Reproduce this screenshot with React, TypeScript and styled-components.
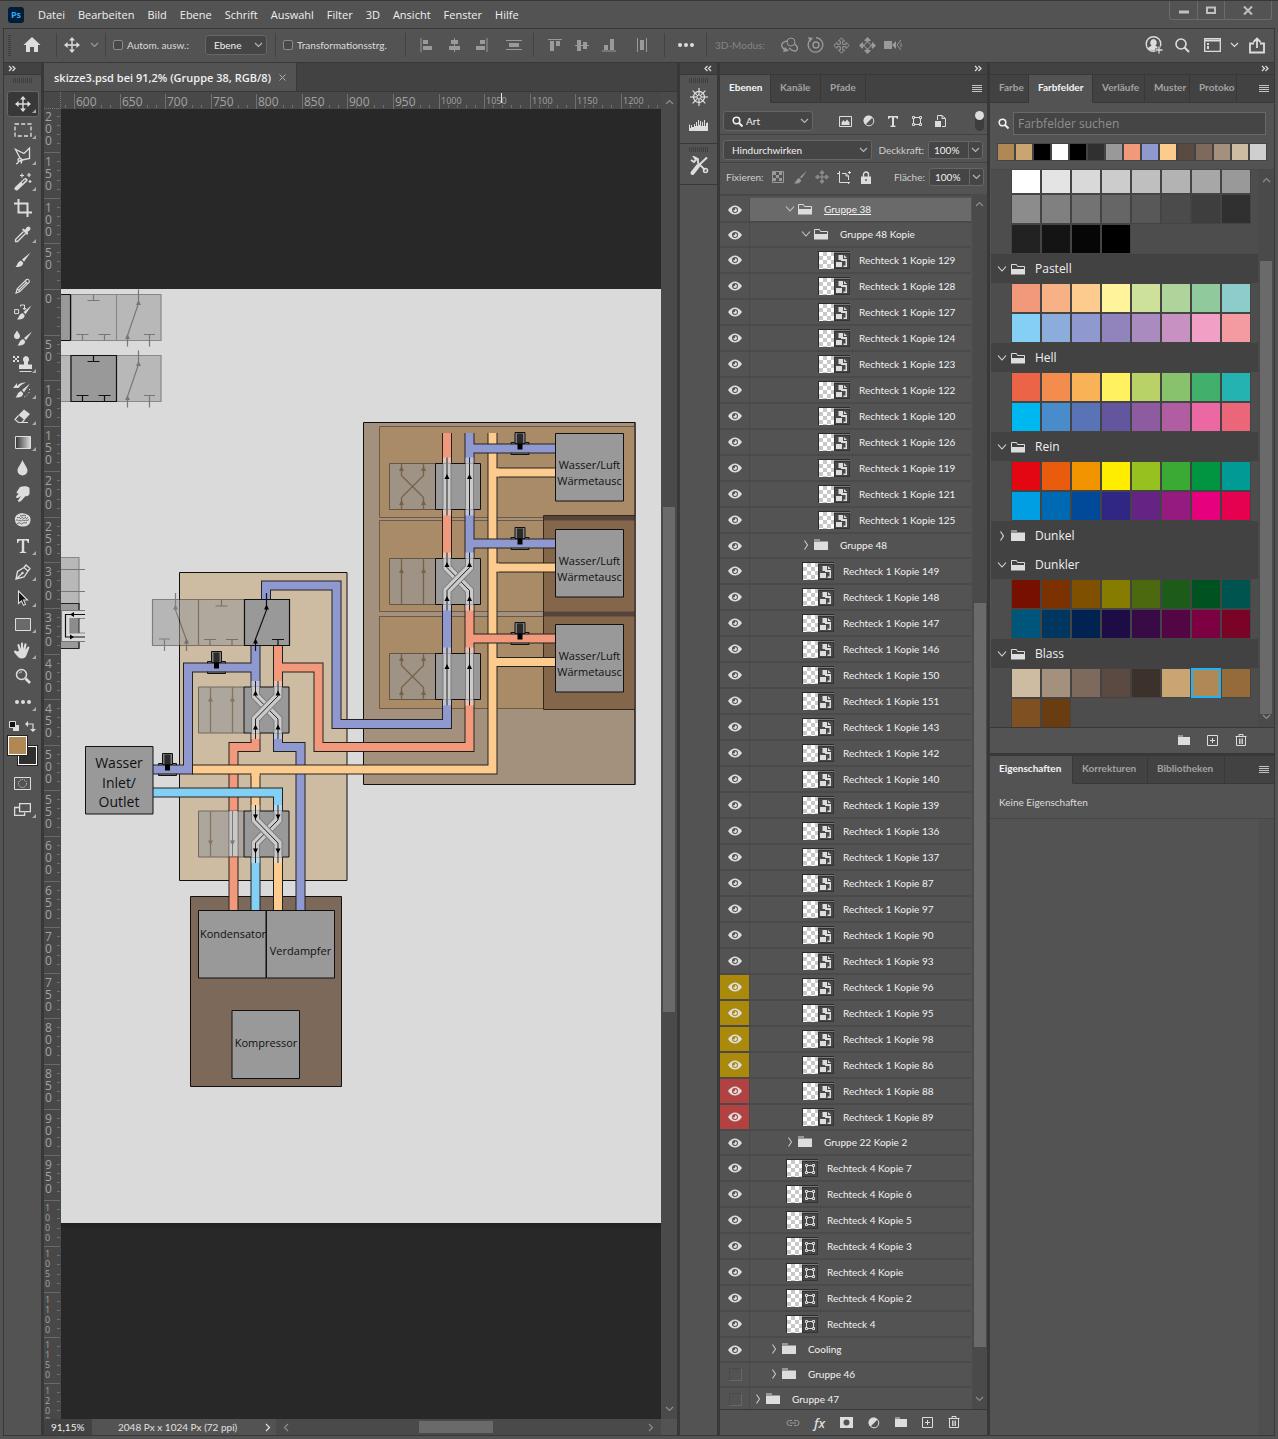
import React from 'react';
import styled, { createGlobalStyle } from 'styled-components';

const ui = '"Open Sans", "Noto Sans", sans-serif';
const small = 'Lato, "Open Sans", sans-serif';

const c = {
  panel: '#535353',
  dark: '#424242',
  track: '#4a4a4a',
  line: '#383838',
  soft: '#474747',
  field: '#454545',
  edge: '#666666',
  icon: '#dddddd',
  dim: '#9a9a9a',
  text: '#f0f0f0',
  label: '#cfcfcf',
};

const Global = createGlobalStyle`
  *, *::before, *::after { box-sizing: border-box; }
  body { margin: 0; background: ${c.panel}; color: ${c.text}; font-family: ${small}; font-size: 10px; }
  button, input, select { font: inherit; color: inherit; margin: 0; padding: 0; border: 0; background: none; outline: none; }
  button { display: inline-flex; align-items: center; justify-content: center; cursor: default; white-space: nowrap; }
  svg { display: block; flex: none; }
`;

/* ---------- icons ---------- */

const S = (w: number, h: number, body: React.ReactNode) => (
  <svg width={w} height={h} viewBox={`0 0 ${w} ${h}`} fill="none" stroke="currentColor" aria-hidden="true">
    {body}
  </svg>
);
const fill = { fill: 'currentColor', stroke: 'none' };

const moveIcon = S(16, 16, (
  <>
    <path d="M8 2v12M2 8h12" strokeWidth="1.4" />
    <path {...fill} d="M8 0l3 3.600H5zM8 16l3-3.600H5zM0 8l3.600-3v6zM16 8l-3.600-3v6z" />
  </>
));
const chevDown = S(9, 6, <path d="M1 1l3.500 3.500L8 1" strokeWidth="1.2" />);
const chevUp = S(9, 6, <path d="M1 5l3.500-3.500L8 5" strokeWidth="1.2" />);
const chevLeft = S(6, 9, <path d="M5 1L1.500 4.500 5 8" strokeWidth="1.2" />);
const chevRight = S(6, 9, <path d="M1 1l3.500 3.500L1 8" strokeWidth="1.2" />);
const treeOpen = S(12, 8, <path d="M2 1.500l4 4.500 4-4.500" strokeWidth="1.1" />);
const treeClosed = S(12, 12, <path d="M4.500 1.500L7.500 6l-3 4.500" strokeWidth="1.1" />);
const dblRight = S(8, 7, <path d="M1 1l2.500 2.500L1 6M4.500 1L7 3.500 4.500 6" strokeWidth="1.3" />);
const dblLeft = S(8, 7, <path d="M3.500 1L1 3.500 3.500 6M7 1L4.500 3.500 7 6" strokeWidth="1.3" />);
const dots = S(16, 6, (
  <g {...fill}>
    <circle cx="2" cy="3" r="2" />
    <circle cx="8" cy="3" r="2" />
    <circle cx="14" cy="3" r="2" />
  </g>
));
const burger = S(10, 9, <path d="M0 1.500h10M0 3.500h10M0 5.500h10M0 7.500h10" />);
const folderOpen = S(14, 12, (
  <>
    <path d="M.5 10V1.500h5l1 2h7V10" />
    <path {...fill} d="M0 6h14v5.500H0z" />
  </>
));
const folderClosed = S(14, 12, <path {...fill} d="M0 .5h6v1H0zM0 2.500h14V11H0z" />);
const folderSmall = S(12, 11, <path {...fill} d="M0 .5h5v1H0zM0 2h12v8H0z" />);
const searchIcon = S(16, 16, (
  <>
    <circle cx="7" cy="7" r="5" strokeWidth="1.6" />
    <path d="M10.500 10.500L15 15" strokeWidth="2" />
  </>
));
const searchSmall = S(11, 11, (
  <>
    <circle cx="4.500" cy="4.500" r="3.300" strokeWidth="1.6" />
    <path d="M7 7l3.500 3.500" strokeWidth="2" />
  </>
));
const homeIcon = S(18, 16, <path {...fill} d="M9 0L.5 8H3v7h4v-5h4v5h4V8h2.500z" />);
const plusBox = S(12, 12, <path d="M.5.5h10v10H.5zM5.500 3v5M3 5.500h5" />);
const trash = S(12, 13, (
  <>
    <path d="M.5 2.500h11M4 2.500v-2h4v2M1.500 2.500v9h9v-9" />
    <path d="M4.500 4.500v5.500M6 4.500v5.500M7.500 4.500v5.500" strokeWidth=".9" />
  </>
));
const halfCircle = S(12, 12, (
  <>
    <circle cx="6" cy="6" r="4.800" />
    <path {...fill} d="M9.500 2.500A5 5 0 1 0 2.500 9.500z" />
  </>
));
const shapeIcon = S(12, 12, (
  <>
    <path d="M2 2.500h8M2 9.500h8M2.500 2v8M9.500 2v8" />
    <path fill={c.panel} d="M1.500 1.500h2v2h-2zM8.500 1.500h2v2h-2zM1.500 8.500h2v2h-2zM8.500 8.500h2v2h-2z" />
  </>
));
const eye = S(14, 10, (
  <path
    {...fill}
    fillRule="evenodd"
    d="M0 5C2 2 4.500.5 7 .5S12 2 14 5c-2 3-4.500 4.500-7 4.500S2 8 0 5zM7 2a3 3 0 1 0 0 6 3 3 0 0 0 0-6zM7 3.200A1.900 1.900 0 1 1 5.200 5.200L7 5z"
  />
));
const smartIcon = S(12, 13, (
  <>
    <path {...fill} d="M0 7h6v5H0zM2.500 0H7v4h4v8H7.500v-1.500h2V6H5V5H2.500z" />
    <path {...fill} d="M8 0l3 3H8z" />
  </>
));

const alignIcons = {
  left: S(14, 14, (
    <>
      <path d="M1 0v14" />
      <path {...fill} d="M3 2h5v4H3zM3 8h9v4H3z" />
    </>
  )),
  centre: S(14, 14, (
    <>
      <path d="M7.500 0v14" />
      <path {...fill} d="M4 2h7v4H4zM2 8h11v4H2z" />
    </>
  )),
  right: S(14, 14, (
    <>
      <path d="M13 0v14" />
      <path {...fill} d="M6 2h5v4H6zM2 8h9v4H2z" />
    </>
  )),
  spread: S(16, 14, (
    <>
      <path d="M0 2.500h16M0 11.500h16" />
      <path {...fill} d="M3 5h10v4H3z" />
    </>
  )),
  top: S(14, 14, (
    <>
      <path d="M0 1.500h14" />
      <path {...fill} d="M2 3h4v10H2zM8 3h4v5H8z" />
    </>
  )),
  middle: S(14, 14, (
    <>
      <path d="M0 7.500h14" />
      <path {...fill} d="M2 2h4v11H2zM8 4h4v7H8z" />
    </>
  )),
  bottom: S(14, 14, (
    <>
      <path d="M0 13h14" />
      <path {...fill} d="M2 7h4v5H2zM8 1h4v11H8z" />
    </>
  )),
  columns: S(14, 14, (
    <>
      <path d="M2.500 0v14M11.500 0v14" />
      <path {...fill} d="M5 2h4v10H5z" />
    </>
  )),
};

const modeIcons = [
  S(19, 16, (
    <>
      <circle cx="11" cy="5" r="4" />
      <path d="M7.500 4C3 4.500 1 7 2 9.500S5 13 7 13M14 6.500c3 2 4 4.500 3 6.500s-5 1-8-2" strokeWidth="1.4" />
      <path {...fill} d="M3 15l6-1-4-4z" />
    </>
  )),
  S(17, 16, (
    <>
      <path d="M4 2a7.300 7.300 0 1 0 5-1.500" strokeWidth="1.3" />
      <circle cx="9" cy="8" r="3" strokeWidth="1.4" />
      <path {...fill} d="M1 0l5 1-3 4z" />
    </>
  )),
  S(17, 17, (
    <path d="M8.500.8l3 3.200H9.700v3.300H13V5.500l3.200 3-3.200 3V9.700H9.700V13h1.800l-3 3.200-3-3.200h1.800V9.700H4v1.800l-3.200-3L4 5.500v1.800h3.300V4H5.500z" />
  )),
  S(17, 17, (
    <>
      <circle cx="8.500" cy="8.500" r="3" />
      <path {...fill} d="M8.500 0l3.500 3.500L8.500 5 5 3.500zM8.500 17l3.500-3.500L8.500 12 5 13.500zM0 8.500L3.500 5 5 8.500 3.500 12zM17 8.500L13.500 5 12 8.500l1.500 3.500z" />
    </>
  )),
  S(18, 12, (
    <>
      <path {...fill} d="M0 2h8v8H0zM8 6l4-4v8z" />
      <path d="M17 1l-4 5 4 5M17 4v4" />
    </>
  )),
];

const tools: { name: string; icon: React.ReactNode; more?: boolean }[] = [
  { name: 'Verschieben', more: true, icon: moveIcon },
  { name: 'Auswahlrechteck', more: true, icon: S(18, 14, <path d="M1 1h16v12H1z" strokeWidth="1.3" strokeDasharray="4 2.200" />) },
  {
    name: 'Lasso', more: true,
    icon: S(18, 18, (
      <path d="M6 11L1.500 2.500 10 6.500 15.500 1v10.500L8 13M5.500 11.500c-2 0-2 2.500 0 2.500s3-2 1.500-2.500zM4.500 14c0 1.500-.8 2.500-2.500 3M8 13.500l-1 3" strokeWidth="1.3" />
    )),
  },
  {
    name: 'Zauberstab', more: true,
    icon: S(18, 18, (
      <>
        <path d="M2.500 15.500l9-8.500" strokeWidth="4" strokeLinecap="round" />
        <path d="M8 10l3.500-3.200" stroke={c.panel} strokeWidth="1.2" />
        <path d="M8 .5v4M6 2.500h4M15 0v4M13 2h4M16 7v3M14.500 8.500h3" strokeWidth="1.2" />
      </>
    )),
  },
  { name: 'Freistellen', icon: S(18, 18, <path d="M4.500 0v13.500H18M0 4.500h13.500V18" strokeWidth="2" />) },
  {
    name: 'Pipette', more: true,
    icon: S(17, 17, (
      <>
        <path d="M9.500 5.500l-8 8v2h2l8-8" strokeWidth="1.3" />
        <path {...fill} d="M8 3.500l1.500-1 1.500 1.200L13 1c2-1.800 4.500.8 3 3l-2.500 2 .8 1.500-1.300 1.500z" />
      </>
    )),
  },
  {
    name: 'Pinsel',
    icon: S(16, 16, <path {...fill} d="M15.500.5L7 7.500l2 2.200zM6 8.500l2.200 2.200C8 14 4.500 15.500.5 15c2-1.500 1.500-5 5.500-6.500z" />),
  },
  {
    name: 'Buntstift',
    icon: S(16, 16, <path d="M1 15l1.200-4.200L11.500 1.500c1.500-1 3.500 1 2.700 2.700L4.900 13.600zM10 3l2.800 2.800M2.200 10.800l2.700 2.800M4 12l8-8" strokeWidth="1.1" />),
  },
  {
    name: 'Farbe ersetzen',
    icon: S(18, 18, (
      <>
        <path d="M.6 6.600h4v4h-4zM6.500 3.500V2h4v4M9 5l1.500 2L12 5" />
        <path {...fill} d="M17.500 2.500L9.500 9l2 2.200zM8.500 10l2.200 2.200C10.500 15.500 7 17 3 16.500c2-1.500 1.500-5 5.500-6.500z" />
      </>
    )),
  },
  {
    name: 'Mischpinsel',
    icon: S(18, 18, (
      <>
        <path {...fill} d="M3 1.500C4.500 4 6 5.500 6 7a3 3 0 0 1-6 0c0-1.500 1.500-3 3-5.500z" />
        <path {...fill} d="M18 2.500L10 9l2 2.200zM9 10l2.200 2.200C11 15.500 7.500 17 3.500 16.500c2-1.500 1.500-5 5.500-6.500z" />
      </>
    )),
  },
  {
    name: 'Kopierstempel', more: true,
    icon: S(20, 18, (
      <>
        <path {...fill} d="M0 1h2v2H0zM4 1h2v2H4zM2 3h2v2H2zM0 5h2v2H0zM4 5h2v2H4z" />
        <path {...fill} d="M13 1a3.500 3.500 0 0 1 2 6v2.500h4V14H6V9.500h5V7a3.500 3.500 0 0 1 2-6z" />
        <path d="M6.500 16.500h12" />
      </>
    )),
  },
  {
    name: 'Protokollpinsel', more: true,
    icon: S(19, 18, (
      <>
        <path {...fill} d="M0 7l4-5v3c3-3 5-3.500 9-3.500C9 3 7 5 5.500 7z" />
        <path {...fill} d="M17 2.500L9 9l2 2.200zM8 10l2.200 2.200C10 15.500 7 17 2.500 16.500c2-1.500 1.500-5 5.500-6.500z" />
        <path d="M16.500 8c0 4-2 7-5.500 8" strokeDasharray="1 2" />
      </>
    )),
  },
  {
    name: 'Radiergummi', more: true,
    icon: S(17, 15, (
      <>
        <path {...fill} d="M10 .5l6 4.500-5.500 6L4.500 6z" />
        <path d="M4.500 6.500L1 10.500l3.500 3L8 13.500l2.500-3M4 13.500h10" strokeWidth="1.2" />
      </>
    )),
  },
  {
    name: 'Verlauf', more: true,
    icon: (
      <svg width="16" height="13" viewBox="0 0 16 13" aria-hidden="true">
        <defs>
          <linearGradient id="toolGradient">
            <stop offset="0" stopColor="#333" />
            <stop offset="1" stopColor="#ddd" />
          </linearGradient>
        </defs>
        <path d="M.5.5h15v12H.5z" fill="url(#toolGradient)" stroke="#ddd" />
      </svg>
    ),
  },
  { name: 'Weichzeichner', icon: S(11, 16, <path {...fill} d="M5.500 0c2 5 5 7.500 5 10.500a5 5 0 0 1-10 0C.5 7.500 3.500 5 5.500 0z" />) },
  {
    name: 'Wischfinger',
    icon: S(15, 16, <path {...fill} d="M5 1c4-1.500 8-1 9.500 1v6c-1 2-3 2.500-4 2L7 14c-1.500 2.500-5 2-4 .5l3-4.500-3 2c-1.500.5-2.500-.8-1.500-2L4 7.500C2 8 1.200 7 2 5.500z" />),
  },
  {
    name: 'Schwamm',
    icon: S(17, 14, (
      <>
        <path {...fill} d="M1 5C2 1 7-.5 10 .5s7 1.500 6.500 7-6 6.500-9 6S0 10 1 5z" />
        <path stroke={c.panel} strokeWidth=".9" d="M3 4c1 2 2-1 3 1s2-2 3 0 2-2 3 0 1 0 2-1M2 7.500c1-2 2 1 3 0s2 1.500 3 0 2 1 3 0 2 1 4-1M3 10c1 1.500 2-1 3 0s2 1.500 3 0 2 1 4-.5M6 2.500l2 .5 2-1 2 1" />
      </>
    )),
  },
  { name: 'Text', more: true, icon: S(14, 14, <path {...fill} d="M1 0h12v4h-1.200C11.500 2 11 1.500 8.200 1.500V12c0 .8.600 1 2 1v1H3.800v-1c1.400 0 2-.2 2-1V1.500C3 1.500 2.500 2 2.200 4H1z" />) },
  {
    name: 'Zeichenstift', more: true,
    icon: S(16, 16, (
      <>
        <path d="M1 15l1.500-7.500L9 3.500l4 3.500-4 6zM1 15l6-5.500M9 3.500l2-2.500 4 3.500L13 7" strokeWidth="1.3" />
        <circle cx="7.500" cy="9" r="1.200" {...fill} />
      </>
    )),
  },
  { name: 'Pfadauswahl', more: true, icon: S(12, 16, <path d="M1.500 1v12.500l3-2.700 2 4.400 2-1-2-4.200h4z" fill="#111" strokeWidth="1.1" />) },
  { name: 'Rechteck', more: true, icon: S(16, 13, <path d="M.5.5h15v12H.5z" fill="#6a6a6a" />) },
  {
    name: 'Hand', more: true,
    icon: S(17, 17, (
      <path {...fill} d="M5 9L3.500 3.500c-.3-1.500 1.500-2 2-.5L7 7V1.500c0-1.500 2-1.500 2 0V7l1.500-5c.5-1.200 2.200-.8 2 .5L11.500 8l2-3c1-1.200 2.200-.3 1.800.8L13 12c-1 3-2.500 4.500-5 4.500-3 0-4.500-2-6.500-4.500L0 10c0-1.500 1.500-2 3-.5z" />
    )),
  },
  { name: 'Zoom', icon: S(16, 16, (
    <>
      <circle cx="6.500" cy="6.500" r="5" strokeWidth="1.5" />
      <path d="M4 5.500c.5-1.200 1.500-1.800 3-1.500" />
      <path d="M10.500 10.500L15 15" strokeWidth="2.600" />
    </>
  )) },
  { name: 'Mehr', more: true, icon: dots },
];

/* ---------- shared frame ---------- */

const Shell = styled.div`
  display: flex;
  flex-direction: column;
  height: 100vh;
  min-width: 1200px;
  background: ${c.panel};
  border-top: 1px solid ${c.line};
`;

const TitleBar = styled.header`
  display: flex;
  flex: none;
  align-items: center;
  height: 27px;
  padding-left: 8px;
`;
const Logo = styled.div`
  display: grid;
  place-items: center;
  width: 16px;
  height: 16px;
  margin-right: 8px;
  border-radius: 3px;
  background: #001e36;
  color: #31a8ff;
  font: 700 9px ${ui};
`;
const Menu = styled.nav`
  display: flex;
  flex: 1;
  gap: 1px;
`;
const MenuItem = styled.button`
  padding: 0 6px;
  font-family: ${ui};
  font-size: 11px;
  line-height: 16px;
`;
const WinControls = styled.div`
  display: flex;
  align-self: flex-start;
  height: 19px;
  margin-right: 6px;
  border: 1px solid #6b6b6b;
  border-top: 0;
  border-radius: 0 0 3px 3px;
  color: #c0c0c0;
`;
const WinButton = styled.button<{ $w: number }>`
  width: ${p => p.$w}px;
  & + & { border-left: 1px solid #6b6b6b; }
`;

const Options = styled.div`
  display: flex;
  flex: none;
  align-items: center;
  height: 34px;
  margin: 0 3px;
  padding: 0 0 1px 4px;
  border: 1px solid ${c.line};
  border-bottom: 0;
`;
const Sep = styled.i<{ $gap?: number }>`
  flex: none;
  width: 1px;
  height: 24px;
  margin-left: ${p => p.$gap ?? 0}px;
  background: #424242;
`;
const IconButton = styled.button<{ $w?: number; $dim?: boolean }>`
  flex: none;
  width: ${p => p.$w ?? 27}px;
  height: 22px;
  color: ${p => (p.$dim ? c.dim : c.icon)};
`;
const Check = styled.label<{ $w: number }>`
  display: flex;
  flex: none;
  align-items: center;
  gap: 4px;
  width: ${p => p.$w}px;
  padding-left: 7px;
  color: #dcdcdc;
  white-space: nowrap;
  input {
    appearance: none;
    width: 10px;
    height: 10px;
    border: 1px solid #8a8a8a;
    border-radius: 2px;
    background: #484848;
  }
`;
const ModeLabel = styled.span`
  flex: none;
  width: 69px;
  padding-left: 8px;
  color: #858585;
`;
const Spacer = styled.div`
  flex: 1;
`;
const AlignSet = styled.div`
  display: flex;
  padding-left: 7px;
`;

const SelectBox = styled.span<{ $w: number; $icon?: boolean }>`
  display: grid;
  flex: none;
  align-items: center;
  width: ${p => p.$w}px;
  height: 20px;
  border: 1px solid ${c.edge};
  border-radius: 3px;
  background: ${c.field};
  & > * { grid-area: 1 / 1; }
  select {
    appearance: none;
    width: 100%;
    height: 18px;
    padding-left: ${p => (p.$icon ? 22 : 8)}px;
  }
`;
const SelectMark = styled.span<{ $lead?: boolean }>`
  justify-self: ${p => (p.$lead ? 'start' : 'end')};
  margin: ${p => (p.$lead ? '0 0 0 8px' : '0 3px 0 0')};
  color: ${p => (p.$lead ? '#f0f0f0' : '#b5b5b5')};
  pointer-events: none;
`;

function Select({ label, value, w, lead }: { label: string; value: string; w: number; lead?: React.ReactNode }) {
  return (
    <SelectBox $w={w} $icon={!!lead}>
      <select aria-label={label} defaultValue={value}>
        <option>{value}</option>
      </select>
      {lead && <SelectMark $lead>{lead}</SelectMark>}
      <SelectMark>{chevDown}</SelectMark>
    </SelectBox>
  );
}

const Workspace = styled.main`
  display: flex;
  flex: 1;
  gap: 3px;
  min-height: 0;
  margin: 0 3px 3px;
  padding: 1px;
  background: ${c.line};
`;
const Column = styled.section<{ $w?: number }>`
  display: flex;
  flex-direction: column;
  flex: ${p => (p.$w ? 'none' : '1 1 0')};
  width: ${p => (p.$w ? `${p.$w}px` : 'auto')};
  min-width: 0;
  min-height: 0;
  background: ${c.panel};
`;
const DockBar = styled.div<{ $end?: boolean }>`
  display: flex;
  align-items: center;
  justify-content: ${p => (p.$end ? 'flex-end' : 'flex-start')};
  flex: none;
  height: 12px;
  padding: 0 5px 0 4px;
  border-bottom: 1px solid ${c.line};
  background: ${c.dark};
  color: #d8d8d8;
`;
const Grip = styled.div`
  flex: none;
  align-self: center;
  width: 20px;
  height: 5px;
  margin-top: 3px;
  background: repeating-linear-gradient(90deg, #3f3f3f 0 1px, transparent 1px 2px);
`;
const SideGrip = styled.div`
  flex: none;
  width: 3px;
  height: 22px;
  background: repeating-linear-gradient(0deg, #3f3f3f 0 1px, transparent 1px 2px);
`;

/* ---------- tool column ---------- */

const ToolList = styled.div`
  display: flex;
  flex-direction: column;
  align-items: center;
  padding-top: 8px;
`;
const ToolButton = styled.button<{ $active?: boolean; $more?: boolean }>`
  position: relative;
  width: 32px;
  height: 26px;
  border: 1px solid ${p => (p.$active ? '#666' : 'transparent')};
  border-radius: 3px;
  background: ${p => (p.$active ? '#383838' : 'none')};
  color: ${c.icon};
  &::after {
    content: '';
    display: ${p => (p.$more ? 'block' : 'none')};
    position: absolute;
    right: 2px;
    bottom: 3px;
    border: 2px solid #aaa;
    border-top-color: transparent;
    border-left-color: transparent;
  }
`;
const ColourTools = styled.div`
  display: flex;
  flex-direction: column;
  align-items: center;
  width: 30px;
  padding-top: 6px;
`;
const MiniRow = styled.div`
  display: flex;
  justify-content: space-between;
  width: 27px;
  height: 15px;
  color: ${c.icon};
`;
const ColourPair = styled.div`
  display: grid;
  grid-template-columns: 10px 9px 10px;
  grid-template-rows: 10px 9px 10px;
  margin-bottom: 5px;
`;
const ColourWell = styled.button<{ $bg: string; $front?: boolean }>`
  grid-area: ${p => (p.$front ? '1 / 1 / 3 / 3' : '2 / 2 / 4 / 4')};
  border: 1px solid #fff;
  outline: 1px solid #222;
  background: ${p => p.$bg};
`;

function Toolbar() {
  return (
    <Column $w={37}>
      <DockBar>{dblRight}</DockBar>
      <Grip />
      <ToolList>
        {tools.map((t, i) => (
          <ToolButton key={t.name} aria-label={t.name} $active={i === 0} $more={t.more}>
            {t.icon}
          </ToolButton>
        ))}
        <ColourTools>
          <MiniRow>
            {S(11, 11, (
              <>
                <path {...fill} d="M4 4h6v6H4z" />
                <path d="M.5.5h6v6h-6z" fill="#111" />
              </>
            ))}
            {S(11, 11, (
              <>
                <path d="M2 3h6v6" strokeWidth="1.2" />
                <path {...fill} d="M0 3l3-3v6zM8 11L5 8h6z" />
              </>
            ))}
          </MiniRow>
          <ColourPair>
            <ColourWell $bg="#2f2f2f" aria-label="Hintergrundfarbe" />
            <ColourWell $bg="#af8855" $front aria-label="Vordergrundfarbe" />
          </ColourPair>
        </ColourTools>
        <ToolButton aria-label="Maskierungsmodus">
          {S(17, 13, (
            <>
              <path d="M.5.5h16v12H.5z" />
              <circle cx="8.500" cy="6.500" r="4" strokeDasharray="1 1" />
            </>
          ))}
        </ToolButton>
        <ToolButton aria-label="Bildschirmmodus" $more>
          {S(17, 13, (
            <>
              <path d="M5 4.500H.6v8h10v-3" strokeWidth="1.3" />
              <path d="M5.600.6h10.800v8H5.600z" fill={c.panel} strokeWidth="1.3" />
            </>
          ))}
        </ToolButton>
      </ToolList>
    </Column>
  );
}

/* ---------- drawing on the artboard ---------- */

const BLUE = '#8f99cf';
const RED = '#f2997c';
const ORANGE = '#fccb8d';
const SKY = '#84d0f5';

const Pipe = ({ d, k }: { d: string; k: string }) => (
  <g fill="none">
    <path d={d} stroke="#222" strokeWidth="10" />
    <path d={d} stroke={k} strokeWidth="8" />
  </g>
);
/* short joint that covers the outline where two runs meet */
const Joint = ({ d, k }: { d: string; k: string }) => <path d={d} stroke={k} strokeWidth="8" fill="none" />;

const Arrow = ({ x, y, down, k = '#000' }: { x: number; y: number; down?: boolean; k?: string }) => (
  <path d={down ? `M${x - 2.5} ${y - 2.5}h5l-2.500 5z` : `M${x - 2.5} ${y + 2.5}h5l-2.500 -5z`} fill={k} />
);

const Sensor = ({ x, y, k, run }: { x: number; y: number; k: string; run: string }) => (
  <g>
    <path d={`M${x - 9} ${y - 6}h18v12h-18z`} fill="#999" stroke="#111" />
    <Joint d={run} k={k} />
    <path d={`M${x - 9} ${y - 4.5}h18M${x - 9} ${y + 4.5}h18`} stroke="#111" />
    <path d={`M${x - 5} ${y - 16}h10v11h-10z`} fill="#808080" stroke="#111" />
    <path d={`M${x - 3} ${y - 15}h6v10h-6z`} fill="#2b2b2b" />
    <path d={`M${x - 2.5} ${y - 5}h5v6h-5z`} fill="#000" />
  </g>
);

const Band = ({ d }: { d: string }) => (
  <g fill="none">
    <path d={d} stroke="#7d7d7d" strokeWidth="9" />
    <path d={d} stroke="#cbcbcb" strokeWidth="7" />
    <path d={d} stroke="#222" />
  </g>
);

/* active half of a valve: crossed or straight channels, box top-left at (x, y) */
const Valve = ({ x, y, kind, down }: { x: number; y: number; kind: 'cross' | 'crossBack' | 'straight'; down?: boolean }) => {
  const a = x + 11.5;
  const b = x + 34;
  const fall = `M${a} ${y}v9l22.500 23v14`;
  const rise = `M${b} ${y}v9l-22.500 23v14`;
  return (
    <g>
      <path d={`M${x} ${y}h45v46h-45z`} fill="#999" stroke="#111" />
      {kind === 'cross' && <><Band d={fall} /><Band d={rise} /></>}
      {kind === 'crossBack' && <><Band d={rise} /><Band d={fall} /></>}
      {kind === 'straight' && <><Band d={`M${a} ${y}v46`} /><Band d={`M${b} ${y}v46`} /></>}
      {[a, b].map(p => (
        <g key={p}>
          <path d={`M${p - 4} ${y - 6}h8v6h-8zM${p - 4} ${y + 46}h8v6h-8z`} fill="#e0e0e0" opacity=".6" />
          <path d={`M${p} ${y - 6}v6M${p} ${y + 46}v6`} stroke="#222" />
          <Arrow x={p} y={y + (kind === 'straight' ? 13 : 6)} down={down} />
          {kind !== 'straight' && <Arrow x={p} y={y + 40} down={down} />}
        </g>
      ))}
    </g>
  );
};

/* faded half of a valve */
const Ghost = ({ x, y, kind, down }: { x: number; y: number; kind: 'cross' | 'straight'; down?: boolean }) => {
  const k = '#554738';
  return (
    <g opacity=".6">
      <path d={`M${x} ${y}h46v46h-46z`} fill="#999" stroke="#333" />
      <path
        d={kind === 'cross' ? `M${x + 12} ${y}v12l22 22v12M${x + 34} ${y}v12l-22 22v12` : `M${x + 12} ${y}v46M${x + 34} ${y}v46`}
        stroke={k} fill="none" strokeWidth="1.3"
      />
      {[12, 34].map(o => (
        <g key={o}>
          <Arrow x={x + o} y={y + (kind === 'cross' ? 5 : down ? 32 : 12)} down={down} k={k} />
          {kind === 'cross' && <Arrow x={x + o} y={y + 39} k={k} />}
        </g>
      ))}
    </g>
  );
};

const Tee = ({ x, y, up }: { x: number; y: number; up?: boolean }) => (
  <path d={up ? `M${x - 6} ${y + 6}h12M${x} ${y}v6` : `M${x - 6} ${y - 6}h12M${x} ${y - 6}v6`} />
);

/* pair of pale switch positions in the upper left corner */
const SwitchRow = ({ y, on }: { y: number; on: boolean }) => (
  <g fill="none" stroke="#777" strokeWidth="1.2">
    <path d={`M60 ${y}h11v46h-11z`} fill={on ? '#b8b8b8' : '#999'} stroke={on ? '#888' : '#111'} />
    <path d={`M116 ${y}h45v46h-45z`} fill="#b8b8b8" stroke="#888" />
    <path d={`M71 ${y}h45.500v46h-45.500z`} fill={on ? '#999' : '#b8b8b8'} stroke={on ? '#111' : '#888'} />
    {!on && <path d={`M70.500 ${y}v46`} stroke="#111" />}
    <g stroke={on ? '#111' : '#777'}>
      <Tee x={93.5} y={y} up />
      <Tee x={82.5} y={y + 46} />
      <Tee x={104.5} y={y + 46} />
    </g>
    <path d={`M138.500 ${y - 5}v14l-11 32v11M149.500 ${y + 52}v-12M144 ${y + 40}h11`} />
    <g stroke="none">
      <Arrow x={138.5} y={y + 8} k="#777" />
      <Arrow x={127.5} y={y + 42} k="#777" />
    </g>
  </g>
);

const DrawText = styled.text<{ $size?: number }>`
  font-family: ${ui};
  font-size: ${p => p.$size ?? 11}px;
  fill: #111;
  text-anchor: middle;
`;

const Exchanger = ({ y }: { y: number }) => (
  <g>
    <path d={`M555.500 ${y}h68v67.500h-68z`} fill="#999" stroke="#111" />
    <DrawText x="589.500" y={y + 35.5}>Wasser/Luft</DrawText>
    <DrawText x="589.500" y={y + 51.5}>Wärmetausc</DrawText>
  </g>
);

function Drawing() {
  return (
    <svg width="600" height="1310" viewBox="61 109 600 1310" role="img" aria-label="Skizze">
      <SwitchRow y={294.5} on={false} />
      <SwitchRow y={355.5} on />

      <g strokeWidth="1.2">
        <path d="M60 557.500h19v46H60z" fill="#b8b8b8" stroke="#888" />
        <path d="M60 569.500h25M60 591.500h25" stroke="#777" />
        <path d="M60 603.500h19v45H60z" fill="#999" stroke="#222" />
        <path d="M85 626H62" fill="none" stroke="#dadada" strokeWidth="31" />
        <path d="M85 610.500H61.500v31H85" fill="none" stroke="#777" />
        <path d="M85 614.500H65.500v22.500H85" fill="none" stroke="#111" />
        <path d="M70 618.500h9v14.500h-9z" fill="#8c8c8c" />
        <path d="M85 618.500H70v14.500h15" fill="none" stroke="#888" />
        <path d="M79 604v6M79 642v6M79 618v15" stroke="#444" />
        <path d="M70 614.500l4-2.500v5zM74 637l-4-2.500v5z" fill="#000" />
      </g>

      <path d="M179.500 572.500h167.500v308h-167.500z" fill="#cdbba2" stroke="#111" />
      <path d="M363.500 422.500h271.500v362h-271.500z" fill="#a4917d" stroke="#111" />
      <g fill="#a98b68" stroke="#6c5a46">
        <path d="M379.500 426.500h255.500v91h-255.500zM379.500 520.500h255.500v91h-255.500zM379.500 616.500h255.500v92h-255.500z" />
      </g>
      <path d="M544 516h91v193h-91z" fill="#84664a" />
      <path d="M544 516h91v4.500h-91zM544 611.500h91v5h-91z" fill="#55443c" />
      <path d="M635 515.500h-91.500v194H635" fill="none" stroke="#35271b" />
      <path d="M635 422v363" stroke="#222" />
      <path d="M190.500 896.500h151v190h-151z" fill="#7d695a" stroke="#111" />

      <Pipe k={RED} d="M233.500 910V747H255.500V730" />
      <Pipe k={BLUE} d="M278 730V747H300.500V910" />
      <Pipe k={ORANGE} d="M192 769.500H492.500V433" />
      <Pipe k={ORANGE} d="M255.500 774V813" />
      <Joint k={ORANGE} d="M255.500 768V776" />
      <Pipe k={SKY} d="M153 792.500H278V813" />
      <Pipe k={SKY} d="M255.500 856V910" />
      <Pipe k={ORANGE} d="M278 856V910" />
      <Pipe k={ORANGE} d="M497 472.500H555.500M497 567.500H555.500M497 662H555.500" />
      <Joint k={ORANGE} d="M492 472.500H499M492 567.500H499M492 662H499" />

      <Pipe k={BLUE} d="M266 600V585.500H336.500V724H447V697" />
      <Pipe k={BLUE} d="M255.500 645V689M255.500 667.500H188V769.500H153" />
      <Pipe k={RED} d="M278 645V689M278 667.500H318.500V747H469.500V697" />

      <Pipe k={RED} d="M447 433V560" />
      <Pipe k={BLUE} d="M469.500 433V560M469.500 448.500H555.500M469.500 543.500H555.500" />
      <Pipe k={BLUE} d="M447 603V655" />
      <Pipe k={RED} d="M469.500 603V655M469.500 638.500H555.500" />

      <Sensor x={216.5} y={667.5} k={BLUE} run="M207 667.500H226" />
      <Sensor x={167.5} y={769.5} k={BLUE} run="M158 769.500H177" />
      <Sensor x={520} y={448.5} k={BLUE} run="M510 448.500H530" />
      <Sensor x={520} y={543.5} k={BLUE} run="M510 543.500H530" />
      <Sensor x={520} y={638.5} k={RED} run="M510 638.500H530" />

      <g fill="none" stroke="#333" opacity=".55" strokeWidth="1.2">
        <path d="M152.500 599.500h46v46h-46zM198.500 599.500h46v46h-46z" fill="#999" />
        <path d="M175.500 593v17l11 30v11M164.500 651v-12M159 639h11" />
        <Tee x={221.5} y={600} up />
        <Tee x={210} y={645.5} />
        <Tee x={232} y={645.5} />
        <g stroke="none">
          <Arrow x={175.5} y={607} k="#333" />
          <Arrow x={186.5} y={641} k="#333" />
        </g>
      </g>
      <g fill="none" stroke="#111" strokeWidth="1.2">
        <path d="M244.500 599.500h45v46h-45z" fill="#999" />
        <path d="M266.500 593v17l-11 29v12" />
        <Tee x={278} y={645.5} />
        <g stroke="none">
          <Arrow x={266.5} y={607} />
          <Arrow x={255.5} y={641} />
        </g>
      </g>

      <Ghost x={198.5} y={687} kind="straight" />
      <Valve x={244} y={687} kind="cross" />
      <Ghost x={198.5} y={811} kind="straight" down />
      <path d="M229.500 811h8v45h-8z" fill="#c8c8c8" />
      <path d="M232.500 811v45" stroke="#777" />
      <Arrow x={232.5} y={843} down k="#777" />
      <Valve x={244} y={811} kind="crossBack" down />

      <Ghost x={389.5} y={463.5} kind="cross" />
      <Valve x={435.5} y={463.5} kind="straight" />
      <Ghost x={389.5} y={558.5} kind="straight" />
      <Valve x={435.5} y={558.5} kind="cross" />
      <Ghost x={389.5} y={653.5} kind="cross" />
      <Valve x={435.5} y={653.5} kind="straight" />

      <Exchanger y={433.5} />
      <Exchanger y={529.5} />
      <Exchanger y={624.5} />

      <path d="M85.500 746.500h67.500v67.500h-67.500z" fill="#999" stroke="#111" />
      <DrawText x="119" y="768" $size={14}>Wasser</DrawText>
      <DrawText x="119" y="788" $size={14}>Inlet/</DrawText>
      <DrawText x="119" y="807" $size={14}>Outlet</DrawText>

      <g fill="#999" stroke="#111">
        <path d="M198.500 910.500h67.500v67.500h-67.500zM266.500 910.500h68v67.500h-68zM232 1010.500h67.500v68h-67.500z" />
      </g>
      <DrawText x="233" y="938">Kondensator</DrawText>
      <DrawText x="300.500" y="955">Verdampfer</DrawText>
      <DrawText x="266" y="1047">Kompressor</DrawText>
    </svg>
  );
}

/* ---------- document window ---------- */

const TabStrip = styled.div`
  display: flex;
  flex: none;
  height: 29px;
  background: ${c.dark};
  border-bottom: 1px solid ${c.line};
`;
const DocTab = styled.div`
  display: flex;
  align-items: center;
  gap: 8px;
  padding: 0 10px;
  border-right: 1px solid ${c.line};
  background: ${c.panel};
  font: 600 11px ${ui};
  white-space: nowrap;
`;
const CloseTab = styled.button`
  color: #b0b0b0;
`;
const DocGrid = styled.div`
  display: grid;
  flex: 1;
  grid-template-columns: 17px minmax(0, 1fr) 16px;
  grid-template-rows: 17px minmax(0, 1fr) 16px;
  min-height: 0;
  background: #484848;
`;
const RulerCell = styled.div`
  overflow: hidden;
  min-width: 0;
  min-height: 0;
  background: #484848;
`;
const Corner = styled.div<{ $plain?: boolean }>`
  background: ${p => (p.$plain ? c.panel : '#484848')};
  border-right: ${p => (p.$plain ? '0' : '1px dotted #777')};
  border-bottom: ${p => (p.$plain ? '0' : '1px dotted #777')};
`;
const Canvas = styled.div`
  overflow: hidden;
  background: linear-gradient(#282828 0 180px, #dadada 180px 1114px, #1f211f 1114px, #282828 1122px);
`;
const RulerText = styled.text<{ $small?: boolean }>`
  font-family: ${ui};
  font-size: ${p => (p.$small ? 9 : 12)}px;
  fill: #a3a3a3;
`;

/* pixels on screen between two numbered ruler marks */
const STEP = 45.57;

function RulerX() {
  const marks = Array.from({ length: 13 }, (_, i) => ({ v: 600 + i * 50, x: Math.round(13 + i * STEP) }));
  return (
    <svg width="600" height="17" viewBox="0 0 600 17" aria-hidden="true">
      <path d="M4.500 13v3" stroke="#707070" />
      {marks.map(m => (
        <g key={m.v}>
          <path d={`M${m.x + 0.5} 2v15`} stroke="#707070" />
          {[1, 2, 3, 4].map(n => (
            <path key={n} d={`M${m.x + Math.round((n * STEP) / 5) + 0.5} 13v3`} stroke="#707070" />
          ))}
          <RulerText x={m.x + 2} y={m.v >= 1000 ? 12 : 14} $small={m.v >= 1000}>{m.v}</RulerText>
        </g>
      ))}
      <path d="M440.500 1v10" stroke="#e8e8e8" />
    </svg>
  );
}

const MarkColumn = styled.div`
  margin-top: -2px;
`;
const MarkY = styled.div`
  display: flex;
  justify-content: space-between;
  margin-right: 1px;
  border-top: 1px solid #6a6a6a;
  overflow: hidden;
`;
const MarkLabel = styled.span<{ $small: boolean }>`
  width: ${p => (p.$small ? 7 : 9)}px;
  padding: ${p => (p.$small ? 2 : 3)}px 0 0 1px;
  color: #a3a3a3;
  font: ${p => (p.$small ? '9px/10px' : '12px/12px')} ${ui};
  word-break: break-all;
`;
const Ticks = styled.span`
  display: flex;
  flex-direction: column;
  justify-content: space-evenly;
  i { width: 3px; height: 1px; background: #707070; }
`;

function RulerY() {
  const at = (i: number) => Math.round(180 + (i - 4) * STEP);
  return (
    <MarkColumn aria-hidden="true">
      {Array.from({ length: 29 }, (_, i) => {
        const v = Math.abs(i - 4) * 50;
        return (
          <MarkY key={i} style={{ height: at(i + 1) - at(i) }}>
            <MarkLabel $small={v >= 1000}>{v}</MarkLabel>
            <Ticks><i /><i /><i /><i /></Ticks>
          </MarkY>
        );
      })}
    </MarkColumn>
  );
}

const Track = styled.div<{ $row?: boolean }>`
  display: flex;
  flex-direction: ${p => (p.$row ? 'row' : 'column')};
  align-items: center;
  flex: ${p => (p.$row ? '1' : 'none')};
  padding: ${p => (p.$row ? '0 7px' : '7px 0')};
  background: ${c.track};
  color: #8c8c8c;
`;
const Gap = styled.div<{ $grow: number }>`
  flex: ${p => p.$grow} 1 0;
`;
const Thumb = styled.div<{ $grow: number; $row?: boolean }>`
  flex: ${p => p.$grow} 1 0;
  width: ${p => (p.$row ? 'auto' : '12px')};
  height: ${p => (p.$row ? '12px' : 'auto')};
  background: #6a6a6a;
`;
const StatusBar = styled.footer`
  grid-column: 1 / 3;
  display: flex;
  align-items: stretch;
  line-height: 16px;
`;
const ZoomField = styled.input`
  flex: none;
  width: 48px;
  && { padding-left: 7px; background: #424242; }
`;
const DocInfo = styled.div`
  display: flex;
  flex: none;
  align-items: center;
  justify-content: space-between;
  width: 184px;
  padding: 0 5px 0 26px;
  background: ${c.panel};
  color: #e0e0e0;
  white-space: nowrap;
`;

function DocumentWindow() {
  return (
    <Column>
      <TabStrip>
        <DocTab>
          skizze3.psd bei 91,2% (Gruppe 38, RGB/8)
          <CloseTab aria-label="Schließen">{S(7, 7, <path d="M.5.5l6 6M6.500.5l-6 6" />)}</CloseTab>
        </DocTab>
      </TabStrip>
      <DocGrid>
        <Corner />
        <RulerCell><RulerX /></RulerCell>
        <Track>{chevUp}</Track>
        <RulerCell><RulerY /></RulerCell>
        <Canvas><Drawing /></Canvas>
        <Track>
          <Gap $grow={390} />
          <Thumb $grow={505} />
          <Gap $grow={393} />
          {chevDown}
        </Track>
        <StatusBar>
          <ZoomField aria-label="Zoomstufe" defaultValue="91,15%" />
          <DocInfo>
            2048 Px x 1024 Px (72 ppi)
            {chevRight}
          </DocInfo>
          <Track $row>
            {chevLeft}
            <Gap $grow={130} />
            <Thumb $row $grow={73} />
            <Gap $grow={155} />
            {chevRight}
          </Track>
        </StatusBar>
        <Corner $plain />
      </DocGrid>
    </Column>
  );
}

/* ---------- narrow icon dock ---------- */

const DockGroup = styled.div<{ $h: number }>`
  display: flex;
  flex: none;
  flex-direction: column;
  align-items: center;
  height: ${p => p.$h}px;
  border-bottom: 1px solid ${c.line};
`;
const DockButton = styled.button`
  flex: none;
  width: 34px;
  height: 28px;
  color: ${c.icon};
`;

const spokes = [0, 45, 90, 135, 180, 225, 270, 315];

function IconDock() {
  return (
    <Column $w={37}>
      <DockBar $end>{dblLeft}</DockBar>
      <DockGroup $h={69}>
        <Grip />
        <DockButton aria-label="Navigator">
          {S(20, 20, (
            <>
              <circle cx="10" cy="10" r="5.500" strokeWidth="1.3" />
              <circle cx="10" cy="10" r="2" />
              {spokes.map(a => <path key={a} d="M10 1v7" strokeWidth="1.2" transform={`rotate(${a} 10 10)`} />)}
            </>
          ))}
        </DockButton>
        <DockButton aria-label="Histogramm">
          {S(20, 13, <path {...fill} d="M0 12V6l1-1v4h1V6h1v2h2V5h1v2h1V3h1v4h1V1h1v5h1V2h1v5h1V3h1v4h1V1h1v6h1V4h1l1-1v9z" />)}
        </DockButton>
      </DockGroup>
      <DockGroup $h={41}>
        <Grip />
        <DockButton aria-label="Werkzeugvorgaben">
          {S(20, 20, (
            <>
              <path d="M2 4l3 2 2-2-2-3 4 2v4l7 7" strokeWidth="1.8" />
              <circle cx="16.500" cy="14.500" r="2" strokeWidth="1.5" />
              <path d="M18 1.500L10 9" strokeWidth="2" />
              <path d="M9 10l-5.500 7" strokeWidth="4" strokeLinecap="round" />
            </>
          ))}
        </DockButton>
      </DockGroup>
    </Column>
  );
}

/* ---------- panels ---------- */

const Tabs = styled.div`
  display: flex;
  flex: none;
  height: 28px;
  background: ${c.dark};
`;
const Tab = styled.button<{ $w: number; $on?: boolean }>`
  flex: none;
  width: ${p => p.$w}px;
  overflow: hidden;
  && {
    justify-content: flex-start;
    padding: 0 0 3px 9px;
    border-right: 1px solid ${c.line};
    border-bottom: 1px solid ${p => (p.$on ? c.panel : c.line)};
    background: ${p => (p.$on ? c.panel : c.dark)};
    color: ${p => (p.$on ? '#f5f5f5' : '#a2a2a2')};
    font-weight: 700;
  }
`;
const TabEnd = styled.div`
  display: flex;
  flex: 1;
  align-items: center;
  justify-content: flex-end;
  padding: 0 5px 0 0;
  border-bottom: 1px solid ${c.line};
  color: #c4c4c4;
`;
const PanelMenu = () => (
  <TabEnd>
    <button aria-label="Bedienfeldmenü">{burger}</button>
  </TabEnd>
);

const ControlRow = styled.div<{ $h: number; $top?: number; $bottom?: number }>`
  display: flex;
  flex: none;
  align-items: center;
  height: ${p => p.$h}px;
  padding: ${p => p.$top ?? 0}px 3px ${p => p.$bottom ?? 0}px;
  border-bottom: ${p => (p.$bottom ? '0' : `1px solid ${c.dark}`)};
`;
const FilterSet = styled.div`
  display: flex;
  flex: 1;
  align-items: center;
  padding-left: 20px;
`;
const FilterSwitch = styled.button`
  width: 9px;
  height: 20px;
  && {
    align-items: flex-start;
    border-radius: 5px;
    background: #3d3d3d;
  }
  &::before {
    content: '';
    width: 9px;
    height: 9px;
    border-radius: 5px;
    background: #ddd;
  }
`;
const FieldLabel = styled.span<{ $w: number; $right?: boolean }>`
  flex: none;
  width: ${p => p.$w}px;
  color: ${c.label};
  text-align: ${p => (p.$right ? 'right' : 'left')};
  padding: 0 4px 0 3px;
  white-space: nowrap;
`;
const Percent = styled.span`
  display: flex;
  flex: none;
  width: 55px;
  height: 18px;
  border: 1px solid ${c.edge};
  border-radius: 3px;
  background: ${c.field};
  input { width: 39px; padding-left: 5px; }
  button { width: 14px; border-left: 1px solid ${c.edge}; color: #b5b5b5; }
`;

function PercentField({ label, w }: { label: string; w: number }) {
  return (
    <>
      <FieldLabel $w={w} $right>{label}:</FieldLabel>
      <Percent>
        <input aria-label={label} defaultValue="100%" />
        <button aria-label={`${label} Regler`}>{chevDown}</button>
      </Percent>
    </>
  );
}

const ListArea = styled.div`
  display: flex;
  flex: 1;
  min-height: 0;
  overflow: hidden;
`;
const Layers = styled.ul`
  flex: 1;
  min-width: 0;
  margin: 0;
  padding: 2px 0 0;
  list-style: none;
  border-top: 2px solid ${c.soft};
`;
const LayerRow = styled.li<{ $group?: boolean }>`
  display: flex;
  height: ${p => (p.$group ? 25 : 26)}px;
  border-bottom: 2px solid #4a4a4a;
`;
const EyeCell = styled.button<{ $tint?: string }>`
  flex: none;
  width: 30px;
  && {
    padding-left: 1px;
    border-right: 1px solid #4a4a4a;
    background: ${p => p.$tint ?? 'none'};
    color: ${c.icon};
  }
`;
const NoEye = styled.i`
  width: 13px;
  height: 13px;
  border: 1px solid #4a4a4a;
  border-right-color: #666;
  border-bottom-color: #666;
`;
const LayerBody = styled.div<{ $depth: number; $on?: boolean; $group?: boolean }>`
  display: flex;
  flex: 1;
  align-items: center;
  min-width: 0;
  padding: 0 0 ${p => (p.$group ? 2 : 0)}px ${p => p.$depth * 16 + 2}px;
  background: ${p => (p.$on ? '#6a6a6a' : 'none')};
  color: ${c.icon};
`;
const LayerName = styled.span<{ $group?: boolean; $on?: boolean }>`
  margin-left: ${p => (p.$group ? 12 : 9)}px;
  color: #f2f2f2;
  line-height: 16px;
  white-space: nowrap;
  text-decoration: ${p => (p.$on ? 'underline' : 'none')};
`;
const LayerThumb = styled.span`
  display: flex;
  width: 32px;
  height: 18px;
  margin-left: 2px;
  border-top: 1px solid #2c2c2c;
  border-left: 1px solid #2c2c2c;
  background: #7a7a7a;
`;
const Checker = styled.span`
  width: 15px;
  background: conic-gradient(#c8c8c8 25%, #fff 0 50%, #c8c8c8 0 75%, #fff 0) 0 0 / 8px 8px;
`;
const Badge = styled.span`
  display: grid;
  place-items: center;
  width: 16px;
  height: 16px;
  margin-top: 1px;
  border: 1px solid #333;
  background: #484848;
`;
const Twist = styled.button`
  width: 12px;
  && { margin-right: 2px; color: #c8c8c8; }
`;

type Layer = { name: string; depth: number; kind: 'open' | 'closed' | 'smart' | 'shape'; tint?: string; hidden?: boolean; on?: boolean };

const rects = (ids: number[], depth: number, tint?: string): Layer[] =>
  ids.map(n => ({ name: `Rechteck 1 Kopie ${n}`, depth, kind: 'smart', tint }));

const layers: Layer[] = [
  { name: 'Gruppe 38', depth: 2, kind: 'open', on: true },
  { name: 'Gruppe 48 Kopie', depth: 3, kind: 'open' },
  ...rects([129, 128, 127, 124, 123, 122, 120, 126, 119, 121, 125], 4),
  { name: 'Gruppe 48', depth: 3, kind: 'closed' },
  ...rects([149, 148, 147, 146, 150, 151, 143, 142, 140, 139, 136, 137, 87, 97, 90, 93], 3),
  ...rects([96, 95, 98, 86], 3, '#ab8a0b'),
  ...rects([88, 89], 3, '#b24242'),
  { name: 'Gruppe 22 Kopie 2', depth: 2, kind: 'closed' },
  ...['Kopie 7', 'Kopie 6', 'Kopie 5', 'Kopie 3', 'Kopie', 'Kopie 2', ''].map(
    (s): Layer => ({ name: `Rechteck 4 ${s}`.trim(), depth: 2, kind: 'shape' }),
  ),
  { name: 'Cooling', depth: 1, kind: 'closed' },
  { name: 'Gruppe 46', depth: 1, kind: 'closed', hidden: true },
  { name: 'Gruppe 47', depth: 0, kind: 'closed', hidden: true },
];

const PanelFooter = styled.div`
  display: flex;
  flex: none;
  align-items: center;
  justify-content: flex-end;
  height: 26px;
  padding-right: 20px;
  border-top: 1px solid ${c.line};
`;
const FxLabel = styled.span`
  font: italic 600 13px ${ui};
`;
const ListTrack = styled(Track)`
  width: 15px;
  margin-left: 1px;
`;

function LayerPanel() {
  return (
    <Column $w={267}>
      <DockBar $end>{dblRight}</DockBar>
      <Tabs>
        <Tab $w={51} $on>Ebenen</Tab>
        <Tab $w={50}>Kanäle</Tab>
        <Tab $w={45}>Pfade</Tab>
        <PanelMenu />
      </Tabs>
      <ControlRow $h={32} $top={5}>
        <Select label="Filter" value="Art" w={90} lead={searchSmall} />
        <FilterSet>
          <IconButton $w={24} aria-label="Pixelebenen">
            {S(13, 11, (
              <>
                <path d="M.5.5h12v10H.5z" />
                <path {...fill} d="M2.500 9V6.500l2-2.500 1.500 2 2-2.500 2.500 3V9z" />
              </>
            ))}
          </IconButton>
          <IconButton $w={24} aria-label="Einstellungsebenen">{halfCircle}</IconButton>
          <IconButton $w={24} aria-label="Textebenen">
            {S(12, 12, <path {...fill} d="M1 1h10v3h-1c0-1-.5-1.500-3-1.500V10c0 .5.500.8 1.500.8V12h-5v-1.200c1 0 1.500-.3 1.500-.8V2.500C2.500 2.500 2 3 2 4H1z" />)}
          </IconButton>
          <IconButton $w={24} aria-label="Formebenen">{shapeIcon}</IconButton>
          <IconButton $w={24} aria-label="Smartobjekte">
            {S(12, 13, (
              <>
                <path {...fill} d="M0 6h6v6H0z" />
                <path d="M2.500 5V.5H7l3.500 3v8H7M7 .5v3h3" />
              </>
            ))}
          </IconButton>
        </FilterSet>
        <FilterSwitch aria-label="Filter ein/aus" />
      </ControlRow>
      <ControlRow $h={28} $top={2}>
        <Select label="Mischmodus" value="Hindurchwirken" w={149} />
        <PercentField label="Deckkraft" w={56} />
      </ControlRow>
      <ControlRow $h={31} $bottom={3}>
        <FieldLabel $w={44}>Fixieren:</FieldLabel>
        <IconButton $w={22} $dim aria-label="Transparenz">
          {S(12, 12, (
            <>
              <path d="M.5.5h11v11H.5z" />
              <path {...fill} d="M1 1h3v3H1zM7 1h3v3H7zM4 4h3v3H4zM1 7h3v3H1zM7 7h3v3H7z" />
            </>
          ))}
        </IconButton>
        <IconButton $w={22} $dim aria-label="Bildpixel">
          {S(13, 14, <path {...fill} d="M13 .5L6 7l1.500 1.500zM5 8l2 2c0 3-3 4-7 3.500 2-1 2-4 5-5.500z" />)}
        </IconButton>
        <IconButton $w={22} $dim aria-label="Position">
          {S(14, 14, (
            <>
              <path d="M7 2v10M2 7h10" />
              <path d="M5 3l2-2.500L9 3zM5 11l2 2.500L9 11zM3 5L.5 7 3 9zM11 5l2.500 2L11 9z" />
            </>
          ))}
        </IconButton>
        <IconButton $w={22} aria-label="Artboard">
          {S(14, 14, (
            <>
              <path d="M2.500 1v11.500H13M0 3.500h3M11.500 14v-2M5 3.500h4l2.500 2.500v4M9 3.500V6h3" />
              <path {...fill} d="M12 1h1v3h-1zM11 2h3v1h-3z" />
            </>
          ))}
        </IconButton>
        <IconButton $w={22} aria-label="Alles">
          {S(12, 13, (
            <>
              <path d="M3.500 6V3.500a2.500 2.500 0 0 1 5 0V6" strokeWidth="1.4" />
              <path {...fill} fillRule="evenodd" d="M1 5.500h10V13H1zM5.300 8v2h1.400V8z" />
            </>
          ))}
        </IconButton>
        <Spacer />
        <PercentField label="Fläche" w={44} />
      </ControlRow>
      <ListArea>
        <Layers>
          {layers.map(l => {
            const group = l.kind === 'open' || l.kind === 'closed';
            return (
              <LayerRow key={l.name} $group={group}>
                <EyeCell $tint={l.tint} aria-label={`Sichtbarkeit ${l.name}`}>{l.hidden ? <NoEye /> : eye}</EyeCell>
                <LayerBody $depth={l.depth} $on={l.on} $group={group}>
                  {group ? (
                    <>
                      <Twist aria-label={`${l.name} auf-/zuklappen`}>{l.kind === 'open' ? treeOpen : treeClosed}</Twist>
                      {l.kind === 'open' ? folderOpen : folderClosed}
                    </>
                  ) : (
                    <LayerThumb>
                      <Checker />
                      <Badge>{l.kind === 'smart' ? smartIcon : shapeIcon}</Badge>
                    </LayerThumb>
                  )}
                  <LayerName $group={group} $on={l.on}>{l.name}</LayerName>
                </LayerBody>
              </LayerRow>
            );
          })}
        </Layers>
        <ListTrack>
          {chevUp}
          <Gap $grow={396} />
          <Thumb $grow={743} />
          <Gap $grow={49} />
          {chevDown}
        </ListTrack>
      </ListArea>
      <PanelFooter>
        <IconButton $dim aria-label="Ebenen verknüpfen">
          {S(14, 8, <path d="M6 1.500H3.500a2.500 2.500 0 0 0 0 5H6M8 1.500h2.500a2.500 2.500 0 0 1 0 5H8M4 4h6" />)}
        </IconButton>
        <IconButton aria-label="Ebenenstil"><FxLabel>fx</FxLabel></IconButton>
        <IconButton aria-label="Maske">
          {S(13, 11, <path {...fill} fillRule="evenodd" d="M0 0h13v11H0zM6.500 2.500a3 3 0 1 0 0 6 3 3 0 0 0 0-6z" />)}
        </IconButton>
        <IconButton aria-label="Einstellungsebene">{halfCircle}</IconButton>
        <IconButton aria-label="Neue Gruppe">{folderSmall}</IconButton>
        <IconButton aria-label="Neue Ebene">{plusBox}</IconButton>
        <IconButton $w={26} aria-label="Ebene löschen">{trash}</IconButton>
      </PanelFooter>
    </Column>
  );
}

/* ---------- swatches ---------- */

const SearchRow = styled.label`
  display: flex;
  align-items: center;
  gap: 4px;
  flex: none;
  padding: 9px 8px 0;
  color: ${c.text};
  input {
    flex: 1;
    min-width: 0;
    height: 23px;
    padding-left: 4px;
    border: 1px solid #686868;
    background: ${c.field};
    font: 12px ${ui};
  }
  input::placeholder { color: #8e8e8e; opacity: 1; }
`;
const Recent = styled.div`
  display: flex;
  flex: none;
  gap: 2px;
  padding: 9px 8px;
`;
const RecentChip = styled.button<{ $bg: string }>`
  width: 16px;
  height: 16px;
  && {
    outline: 1px solid #444;
    background: ${p => p.$bg};
  }
`;
const SwatchArea = styled.div`
  display: flex;
  flex: none;
  height: 558px;
  overflow: hidden;
  border-top: 1px solid ${c.soft};
`;
const SwatchScroll = styled.div`
  flex: 1;
  overflow: hidden;
  margin-left: 1px;
  background: #4d4d4d;
`;
const SwatchInner = styled.div<{ $scrolled: number }>`
  margin-top: -${p => p.$scrolled}px;
`;
const GroupHead = styled.h3`
  display: flex;
  align-items: center;
  gap: 3px;
  height: 29px;
  margin: 0;
  padding-left: 5px;
  background: ${c.dark};
  color: ${c.icon};
  font: 400 12px ${ui};
  span { margin-left: 7px; color: #f0f0f0; }
`;
const SwatchGrid = styled.div`
  display: grid;
  grid-template-columns: repeat(8, 28px);
  gap: 2px;
  padding: 1px 0 1px 21px;
`;
const Chip = styled.button<{ $bg: string; $on?: boolean }>`
  height: 28px;
  && {
    background: ${p => p.$bg};
    outline: ${p => (p.$on ? '2px solid #1fb2f5' : '1px solid #444')};
    outline-offset: ${p => (p.$on ? '-1px' : '0')};
  }
  z-index: ${p => (p.$on ? 1 : 0)};
`;

const greys = ['#fff', '#e4e4e4', '#d9d9d9', '#cccccc', '#bfbfbf', '#b3b3b3', '#a7a7a7', '#999999', '#8c8c8c', '#808080', '#737373', '#666666', '#585858', '#4b4b4b', '#3e3e3e', '#303030', '#222222', '#141414', '#060606', '#000'];
const groups: { name: string; colours: string[] }[] = [
  { name: 'Pastell', colours: ['#f2997c', '#f6b285', '#fccb8d', '#fff49c', '#cee19b', '#afd49b', '#90c99c', '#8ccccb', '#84d0f5', '#8caddc', '#8f99cf', '#9184bd', '#a98bc0', '#c791c2', '#f19fc5', '#f39ba0'] },
  { name: 'Hell', colours: ['#eb6447', '#f38c4c', '#f9b256', '#fff15f', '#b8d267', '#88c26d', '#40b06c', '#25b3b1', '#00b8f0', '#498ccb', '#5974b6', '#63569f', '#8d5ba0', '#b05ea1', '#ec68a2', '#eb6678'] },
  { name: 'Rein', colours: ['#e30613', '#e95b0d', '#f29400', '#ffed00', '#97c11f', '#3aaa35', '#009540', '#009b94', '#009fe3', '#0069b4', '#004a99', '#302683', '#652483', '#951b81', '#e6007e', '#e50050'] },
  { name: 'Dunkel', colours: [] },
  { name: 'Dunkler', colours: ['#771000', '#7c3100', '#7f5000', '#867d00', '#4d690f', '#1d5c18', '#005221', '#00544f', '#00557b', '#00375f', '#002352', '#1d0c46', '#380a46', '#520644', '#7c0042', '#7a0426'] },
  { name: 'Blass', colours: ['#cdbba2', '#a4917d', '#7e6a5c', '#5b4a41', '#3d312c', '#c9a572', '#af8855', '#966b3a', '#7f5022', '#693c11'] },
];
const recent = ['#af8855', '#c9a572', '#000', '#fff', '#000', '#303030', '#999', '#f2997c', '#8f99cf', '#fccb8d', '#5b4a41', '#7e6a5c', '#a4917d', '#cdbba2', '#cfcfcf'];

const FarTrack = styled(Track)`
  width: 16px;
`;
const Empty = styled.p`
  flex: none;
  height: 35px;
  margin: 0;
  padding: 0 9px;
  border-bottom: 1px solid ${c.soft};
  color: #dcdcdc;
  line-height: 36px;
`;
const PropertyBody = styled.div`
  display: flex;
  flex: 1;
  justify-content: flex-end;
`;
const EmptyTrack = styled.div`
  width: 16px;
  background: #4f4f4f;
`;
const PanelGap = styled.div`
  flex: none;
  height: 3px;
  background: ${c.line};
`;

function SwatchPanel() {
  return (
    <Column $w={284}>
      <DockBar $end>{dblRight}</DockBar>
      <Tabs>
        <Tab $w={39}>Farbe</Tab>
        <Tab $w={64} $on>Farbfelder</Tab>
        <Tab $w={52}>Verläufe</Tab>
        <Tab $w={45}>Muster</Tab>
        <Tab $w={47}>Protoko</Tab>
        <PanelMenu />
      </Tabs>
      <SearchRow>
        {searchSmall}
        <input aria-label="Farbfelder suchen" placeholder="Farbfelder suchen" />
      </SearchRow>
      <Recent>
        {recent.map((k, i) => <RecentChip key={i} $bg={k} aria-label={`Zuletzt ${k}`} />)}
      </Recent>
      <SwatchArea>
        <SwatchScroll>
          <SwatchInner $scrolled={6}>
            <SwatchGrid>
              {greys.map(k => <Chip key={k} $bg={k} aria-label={k} />)}
            </SwatchGrid>
            {groups.map(g => (
              <React.Fragment key={g.name}>
                <GroupHead>
                  {g.colours.length ? treeOpen : treeClosed}
                  {g.colours.length ? folderOpen : folderClosed}
                  <span>{g.name}</span>
                </GroupHead>
                {g.colours.length > 0 && (
                  <SwatchGrid>
                    {g.colours.map((k, i) => (
                      <Chip key={k} $bg={k} $on={g.name === 'Blass' && i === 6} aria-label={`${g.name} ${k}`} />
                    ))}
                  </SwatchGrid>
                )}
              </React.Fragment>
            ))}
          </SwatchInner>
        </SwatchScroll>
        <FarTrack>
          {chevUp}
          <Gap $grow={78} />
          <Thumb $grow={450} />
          {chevDown}
        </FarTrack>
      </SwatchArea>
      <PanelFooter>
        <IconButton $w={29} aria-label="Neue Gruppe">{folderSmall}</IconButton>
        <IconButton $w={29} aria-label="Neues Farbfeld">{plusBox}</IconButton>
        <IconButton $w={27} aria-label="Farbfeld löschen">{trash}</IconButton>
      </PanelFooter>
      <PanelGap />
      <Tabs>
        <Tab $w={83} $on>Eigenschaften</Tab>
        <Tab $w={75}>Korrekturen</Tab>
        <Tab $w={77}>Bibliotheken</Tab>
        <PanelMenu />
      </Tabs>
      <Empty>Keine Eigenschaften</Empty>
      <PropertyBody><EmptyTrack /></PropertyBody>
    </Column>
  );
}

/* ---------- page ---------- */

const menu = ['Datei', 'Bearbeiten', 'Bild', 'Ebene', 'Schrift', 'Auswahl', 'Filter', '3D', 'Ansicht', 'Fenster', 'Hilfe'];

export default function App() {
  return (
    <>
      <Global />
      <Shell>
        <TitleBar>
          <Logo>Ps</Logo>
          <Menu>
            {menu.map(m => <MenuItem key={m}>{m}</MenuItem>)}
          </Menu>
          <WinControls>
            <WinButton $w={27} aria-label="Minimieren">{S(10, 10, <path d="M0 7h10" strokeWidth="3" />)}</WinButton>
            <WinButton $w={27} aria-label="Maximieren">{S(10, 9, <path d="M1 1.500h8v5.500H1z" strokeWidth="2" />)}</WinButton>
            <WinButton $w={47} aria-label="Schließen">{S(10, 9, <path d="M1 .5l8 8M9 .5l-8 8" strokeWidth="2" />)}</WinButton>
          </WinControls>
        </TitleBar>
        <Options>
          <SideGrip />
          <IconButton $w={41} aria-label="Startseite">{homeIcon}</IconButton>
          <Sep $gap={4} />
          <IconButton $w={30} aria-label="Verschieben-Werkzeug">{moveIcon}</IconButton>
          <IconButton $w={14} $dim aria-label="Werkzeugvorgaben">{chevDown}</IconButton>
          <Sep $gap={4} />
          <Check $w={99}><input type="checkbox" />Autom. ausw.:</Check>
          <Select label="Auswählen" value="Ebene" w={62} />
          <Sep $gap={8} />
          <Check $w={129}><input type="checkbox" />Transformationsstrg.</Check>
          <Sep />
          <AlignSet>
            <IconButton $dim aria-label="Linke Kanten">{alignIcons.left}</IconButton>
            <IconButton $dim aria-label="Horizontale Mitten">{alignIcons.centre}</IconButton>
            <IconButton $dim aria-label="Rechte Kanten">{alignIcons.right}</IconButton>
            <IconButton $dim $w={39} aria-label="Verteilen">{alignIcons.spread}</IconButton>
          </AlignSet>
          <Sep />
          <AlignSet>
            <IconButton $dim aria-label="Obere Kanten">{alignIcons.top}</IconButton>
            <IconButton $dim aria-label="Vertikale Mitten">{alignIcons.middle}</IconButton>
            <IconButton $dim aria-label="Untere Kanten">{alignIcons.bottom}</IconButton>
            <IconButton $dim $w={39} aria-label="Horizontal verteilen">{alignIcons.columns}</IconButton>
          </AlignSet>
          <Sep $gap={3} />
          <IconButton $w={41} aria-label="Weitere Optionen">{dots}</IconButton>
          <Sep />
          <ModeLabel>3D-Modus:</ModeLabel>
          {modeIcons.map((icon, i) => (
            <IconButton key={i} $w={26} $dim aria-label={`3D-Modus ${i + 1}`}>{icon}</IconButton>
          ))}
          <Spacer />
          <IconButton $w={28} aria-label="Konto">
            {S(18, 18, (
              <>
                <circle cx="8.500" cy="8" r="7.300" strokeWidth="1.4" />
                <path {...fill} d="M8.500 3a3.500 3.500 0 0 1 2 6.200c0 1 3 1.300 3.500 3C12 15 5 15 3 12.500c.5-2 3.500-2.300 3.500-3.300A3.500 3.500 0 0 1 8.500 3z" />
                <path d="M14 10v8M10 14h8" stroke={c.panel} strokeWidth="3" />
                <path d="M14 10.500v7M10.500 14h7" strokeWidth="1.3" />
              </>
            ))}
          </IconButton>
          <IconButton $w={28} aria-label="Suchen">{searchIcon}</IconButton>
          <IconButton $w={32} aria-label="Arbeitsbereich">
            {S(17, 14, (
              <>
                <path d="M.7.7h15.600v12.600H.7z" strokeWidth="1.3" />
                <path d="M1 2.500h15" strokeWidth="2" />
                <path {...fill} d="M3 5h2v2H3zM3 8h2v3H3z" />
              </>
            ))}
          </IconButton>
          <IconButton $w={12} aria-label="Arbeitsbereich wählen">{chevDown}</IconButton>
          <IconButton $w={34} aria-label="Bereitstellen">
            {S(16, 17, (
              <path d="M5 6.500H1v9h14v-9h-4M8 11V2M4.500 5L8 1.500 11.500 5" strokeWidth="1.8" />
            ))}
          </IconButton>
        </Options>
        <Workspace>
          <Toolbar />
          <DocumentWindow />
          <IconDock />
          <LayerPanel />
          <SwatchPanel />
        </Workspace>
      </Shell>
    </>
  );
}
